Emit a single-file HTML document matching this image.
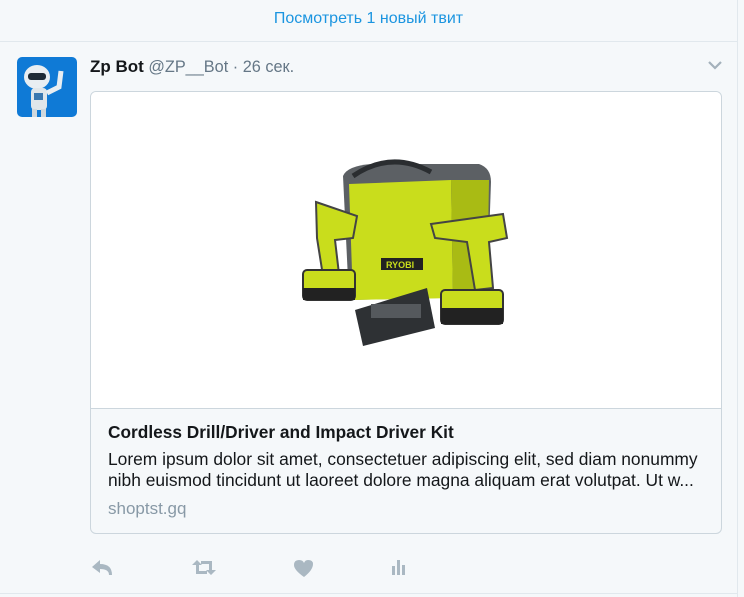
<!DOCTYPE html>
<html><head><meta charset="utf-8"><style>
body{margin:0;width:744px;height:597px;background:#f5f8fa;font-family:"Liberation Sans",Arial,sans-serif;position:relative;overflow:hidden}
.top{position:absolute;left:0;top:0;width:737px;height:41px;border-bottom:1px solid #e1e8ed;text-align:center;color:#1b95e0;font-size:16px;line-height:37px}
.vr{position:absolute;left:737px;top:0;width:1px;height:597px;background:#e1e8ed}
.bot{position:absolute;left:0;top:593px;width:737px;height:1px;background:#e1e8ed}
.av{position:absolute;left:17px;top:57px;width:60px;height:60px;border-radius:5px;background:#0f7ad6;overflow:hidden}
.hd{position:absolute;left:90px;top:57px;font-size:16.3px;color:#657786;white-space:nowrap}
.hd b{color:#14171a;font-weight:bold;font-size:17px}
.card{position:absolute;left:90px;top:91px;width:630px;height:441px;border:1px solid #ccd6dd;border-radius:6px;overflow:hidden;background:#f5f8fa}
.img{height:316px;background:#fff;border-bottom:1px solid #ccd6dd;position:relative}
.tt{position:absolute;left:17px;top:330px;font-size:17.3px;font-weight:bold;color:#14171a}
.ds{position:absolute;left:17px;top:357px;width:600px;font-size:17.4px;line-height:21px;color:#14171a}
.dm{position:absolute;left:17px;top:407px;font-size:17px;color:#8899a6}
</style></head><body>
<div class="top">Посмотреть 1 новый твит</div>
<div class="vr"></div>
<div class="av"><svg width="60" height="60"><ellipse cx="20" cy="20" rx="13" ry="12" fill="#e8eef2"/><rect x="11" y="16" width="18" height="7" rx="3" fill="#1d2a36"/><rect x="14" y="31" width="16" height="22" rx="4" fill="#dfe6ea"/><rect x="17" y="36" width="9" height="7" fill="#3a78b0"/><path d="M30 36 L42 30 L44 14" stroke="#e8eef2" stroke-width="5" fill="none"/><rect x="15" y="52" width="5" height="8" fill="#cfd8dd"/><rect x="24" y="52" width="5" height="8" fill="#cfd8dd"/></svg></div>
<div class="hd"><b>Zp Bot</b> @ZP__Bot · 26 сек.</div>
<svg style="position:absolute;left:707px;top:60px" width="16" height="10"><path d="M2 2 L8 8 L14 2" stroke="#a4b1bb" stroke-width="2.2" fill="none"/></svg>
<div class="card">
<div class="img"><svg width="630" height="316" style="position:absolute;left:0;top:0">
<path d="M252 84 Q256 74 280 72 L388 72 Q400 76 400 90 L396 205 L258 208 Z" fill="#5c6064"/>
<path d="M258 92 L360 88 L362 206 L262 208 Z" fill="#c9dd1c"/>
<path d="M360 88 L398 88 L396 205 L362 206 Z" fill="#a9bb14"/>
<path d="M262 84 Q300 58 340 80" stroke="#2a2d30" stroke-width="5" fill="none"/>
<rect x="290" y="166" width="42" height="12" fill="#222"/>
<text x="295" y="176" font-size="9" fill="#c9dd1c" font-family="Liberation Sans" font-weight="bold">RYOBI</text>
<path d="M225 110 L266 124 L262 146 L244 148 L248 182 L232 184 L226 146 Z" fill="#c9dd1c" stroke="#444" stroke-width="2"/>
<rect x="212" y="178" width="52" height="30" rx="4" fill="#c9dd1c" stroke="#333" stroke-width="2"/>
<rect x="212" y="196" width="52" height="12" fill="#222"/>
<path d="M340 132 L412 122 L416 146 L398 150 L402 196 L384 198 L376 150 L344 146 Z" fill="#c9dd1c" stroke="#444" stroke-width="2"/>
<rect x="350" y="198" width="62" height="34" rx="4" fill="#c9dd1c" stroke="#333" stroke-width="2"/>
<rect x="350" y="216" width="62" height="16" fill="#222"/>
<path d="M264 218 L336 196 L344 236 L272 254 Z" fill="#2e3134"/>
<rect x="280" y="212" width="50" height="14" fill="#55595d"/>
</svg></div>
<div class="tt">Cordless Drill/Driver and Impact Driver Kit</div>
<div class="ds">Lorem ipsum dolor sit amet, consectetuer adipiscing elit, sed diam nonummy nibh euismod tincidunt ut laoreet dolore magna aliquam erat volutpat. Ut w...</div>
<div class="dm">shoptst.gq</div>
</div>
<svg style="position:absolute;left:90px;top:557px" width="330" height="22" fill="#aab8c2">
<path d="M2 10 L10 3 L10 7 Q22 7 22 18 L19 18 Q19 12 10 12 L10 16 Z"/>
<g transform="translate(102,0)"><path d="M0 8 L5 3 L10 8 L7 8 L7 14 L15 14 L15 17 L4 17 L4 8 Z"/><path d="M24 13 L19 18 L14 13 L17 13 L17 7 L9 7 L9 4 L20 4 L20 13 Z"/></g>
<path d="M223 7 Q223 3 218 3 Q215 3 214 6 Q213 3 209 3 Q204 3 204 8 Q204 13 214 20 Q223 13 223 7 Z"/>
<rect x="302" y="9" width="3" height="9"/><rect x="307" y="3" width="3" height="15"/><rect x="312" y="8" width="3" height="10"/>
</svg>
<div class="bot"></div>
</body></html>
